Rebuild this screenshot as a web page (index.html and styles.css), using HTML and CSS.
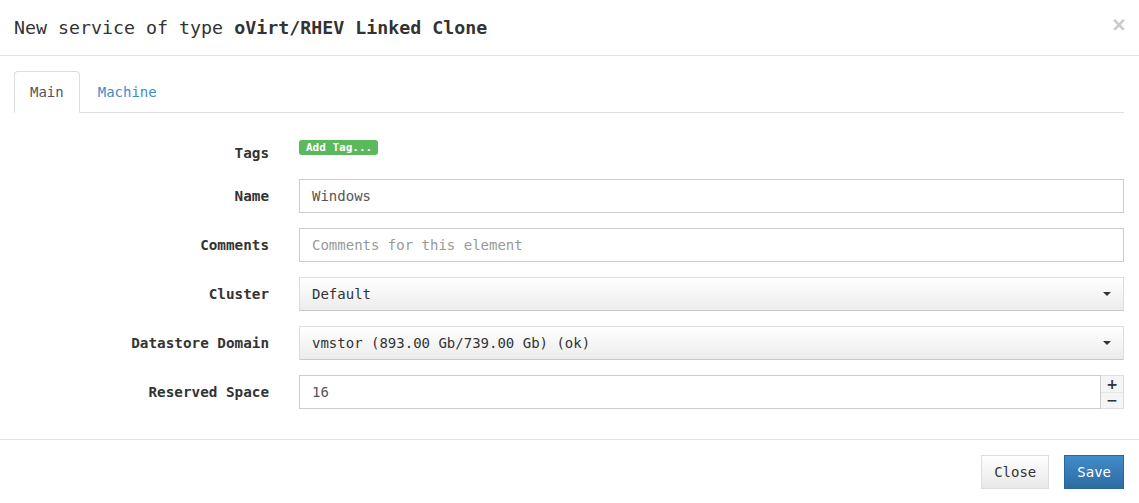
FILE: index.html
```html
<!DOCTYPE html>
<html>
<head>
<meta charset="utf-8">
<link rel="stylesheet" href="styles.css">
</head>
<body>
<div class="modal">
  <div class="modal-header">
    <h4 class="modal-title">New service of type <b>oVirt/RHEV Linked Clone</b></h4>
    <span class="close">×</span>
  </div>
  <div class="modal-body">
    <ul class="tabs">
      <li class="tab active"><a>Main</a></li>
      <li class="tab"><a>Machine</a></li>
    </ul>
    <div class="form">
      <div class="row row-tags">
        <label class="label">Tags</label>
        <div class="control"><span class="badge">Add Tag...</span></div>
      </div>
      <div class="row">
        <label class="label">Name</label>
        <div class="control"><div class="input">Windows</div></div>
      </div>
      <div class="row">
        <label class="label">Comments</label>
        <div class="control"><div class="input placeholder">Comments for this element</div></div>
      </div>
      <div class="row">
        <label class="label">Cluster</label>
        <div class="control"><div class="select">Default<span class="caret"></span></div></div>
      </div>
      <div class="row">
        <label class="label">Datastore Domain</label>
        <div class="control"><div class="select">vmstor (893.00 Gb/739.00 Gb) (ok)<span class="caret"></span></div></div>
      </div>
      <div class="row">
        <label class="label">Reserved Space</label>
        <div class="control spin">
          <div class="input">16</div>
          <div class="spin-btns">
            <span class="spin-btn">+</span>
            <span class="spin-btn">−</span>
          </div>
        </div>
      </div>
    </div>
  </div>
  <div class="modal-footer">
    <button class="btn btn-default">Close</button>
    <button class="btn btn-primary">Save</button>
  </div>
</div>
</body>
</html>
```

FILE: styles.css
```css
* { box-sizing: border-box; }
html, body { margin: 0; padding: 0; background: #fff; }
body {
  font-family: "DejaVu Sans Mono", "Liberation Mono", monospace;
  font-size: 14px;
  line-height: 20px;
  color: #333;
}
.modal { width: 1139px; }
.modal-header {
  display: flex;
  align-items: center;
  justify-content: space-between;
  padding: 16px 12px 15px 14px;
  border-bottom: 1px solid #e5e5e5;
}
.modal-title {
  margin: 0;
  font-size: 18.3px;
  line-height: 24px;
  font-weight: normal;
  color: #333;
}
.modal-title b { font-weight: bold; }
.close {
  font-family: "DejaVu Sans", sans-serif;
  font-size: 19px;
  font-weight: bold;
  color: #c8c8c8;
  line-height: 20px;
  margin-top: -8px;
}
.modal-body { padding: 15px 15px 15px 14px; }
.tabs {
  list-style: none;
  margin: 0;
  padding: 0;
  display: flex;
  border-bottom: 1px solid #ddd;
}
.tab { margin-bottom: -1px; margin-right: 2px; }
.tab a {
  display: block;
  padding: 10px 15px;
  border: 1px solid transparent;
  border-radius: 4px 4px 0 0;
  color: #428bca;
}
.tab.active a {
  color: #555;
  background: #fff;
  border-color: #ddd #ddd transparent;
}
.form { padding-top: 23px; }
.row {
  display: grid;
  grid-template-columns: 255px 1fr;
  column-gap: 30px;
  margin-bottom: 15px;
}
.row-tags { height: 28px; }
.label {
  text-align: right;
  font-weight: bold;
  font-size: 14.3px;
  padding-top: 7px;
  color: #333;
}
.badge {
  display: inline-block;
  background: #5cb85c;
  color: #fff;
  font-size: 11px;
  font-weight: bold;
  line-height: 13px;
  padding: 1px 6px 1px 7px;
  border-radius: 3px;
  margin-top: 1px;
}
.input, .select {
  height: 34px;
  padding: 6px 12px;
  border: 1px solid #ccc;
  border-radius: 0;
  color: #555;
  background: #fff;
}
.placeholder { color: #999; }
.select {
  display: flex;
  justify-content: space-between;
  align-items: center;
  background: linear-gradient(#fff, #ececec);
  border-color: #e0e0e0 #ddd #c8c8c8;
  color: #333;
}
.caret {
  width: 0;
  height: 0;
  border-left: 4px solid transparent;
  border-right: 4px solid transparent;
  border-top: 4px solid #333;
}
.spin { display: flex; }
.spin .input { flex: 1; }
.spin-btns {
  width: 23px;
  display: flex;
  flex-direction: column;
  border: 1px solid #ddd;
  border-left: none;
}
.spin-btn {
  flex: 1;
  display: flex;
  align-items: center;
  justify-content: center;
  font-family: "DejaVu Sans", sans-serif;
  font-weight: bold;
  font-size: 14px;
  line-height: 1;
  background: #f5f5f5;
  color: #333;
}
.spin-btn + .spin-btn { border-top: 1px solid #e5e5e5; }
.modal-footer {
  display: flex;
  justify-content: flex-end;
  gap: 15px;
  padding: 15px 15px 14px;
  border-top: 1px solid #e5e5e5;
}
.btn {
  font-family: inherit;
  font-size: 14px;
  line-height: 20px;
  height: 34px;
  padding: 6px 12px;
  border: 1px solid;
  border-radius: 0;
}
.btn-default {
  color: #333;
  background: linear-gradient(#fff, #e8e8e8);
  border-color: #ddd;
}
.btn-primary {
  color: #fff;
  background: linear-gradient(#428bca, #2d6ca2);
  border-color: #2b669a;
}
```
